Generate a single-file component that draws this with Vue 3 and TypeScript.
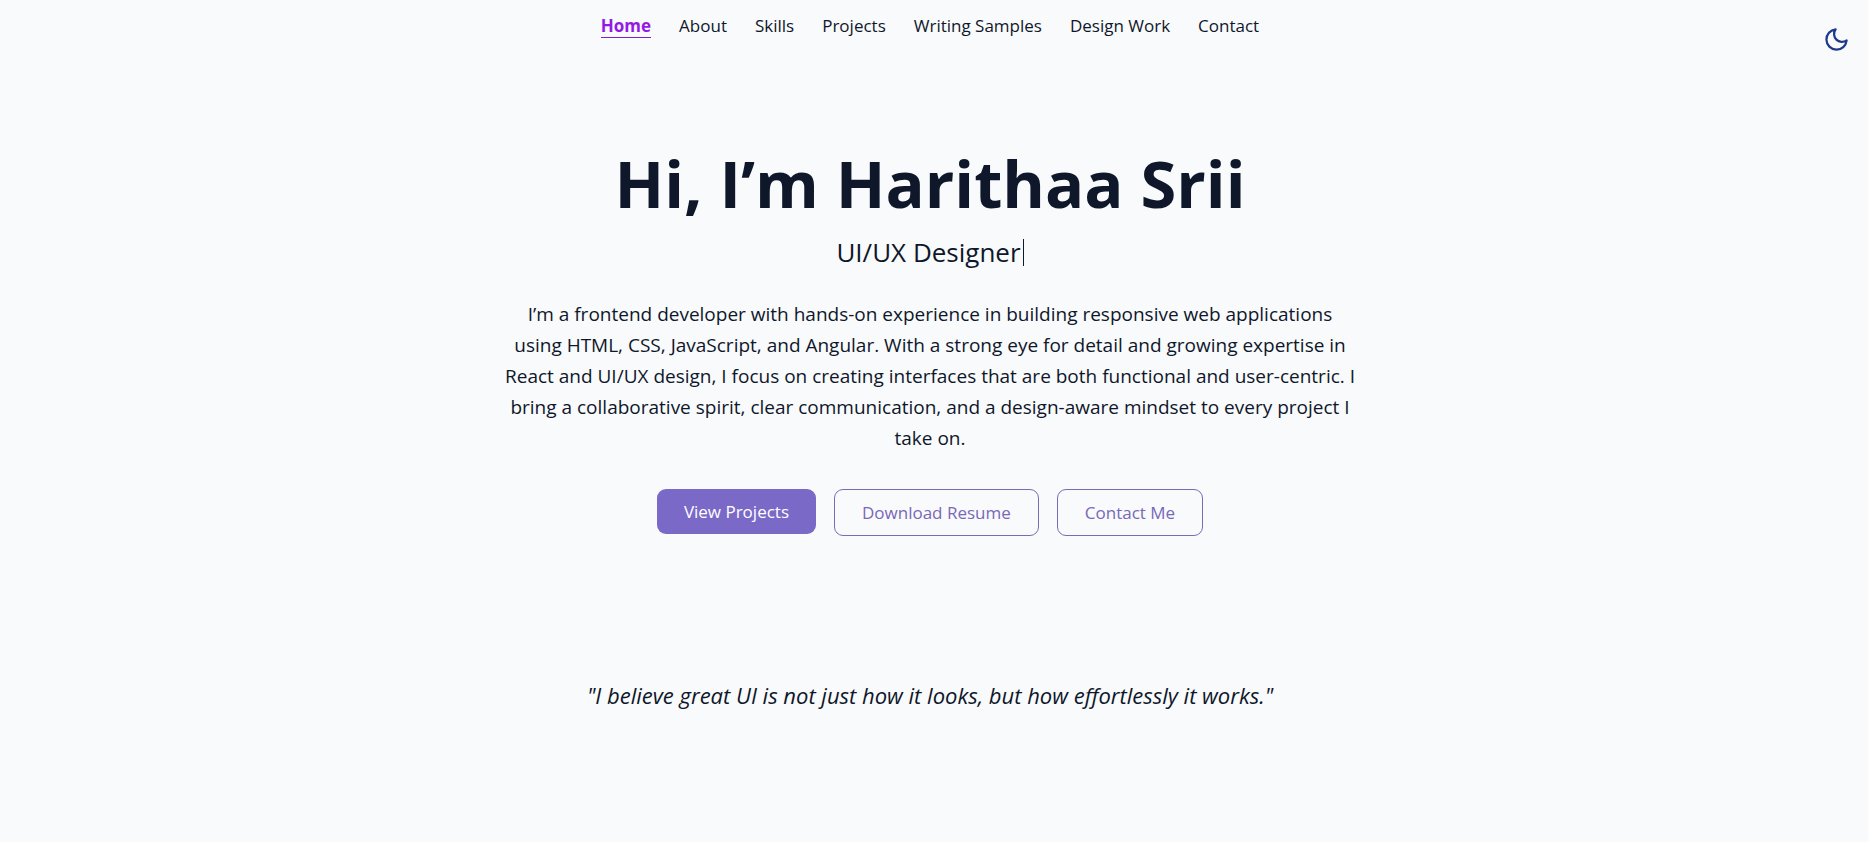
<script setup lang="ts">
import { ref } from 'vue'

interface NavLink {
  label: string
  target: string
}

const links: NavLink[] = [
  { label: 'Home', target: '#home' },
  { label: 'About', target: '#about' },
  { label: 'Skills', target: '#skills' },
  { label: 'Projects', target: '#projects' },
  { label: 'Writing Samples', target: '#writing' },
  { label: 'Design Work', target: '#design' },
  { label: 'Contact', target: '#contact' },
]

const active = ref('Home')
const dark = ref(false)
</script>

<template>
  <div class="page" :class="{ dark }">
    <header class="topbar">
      <nav class="nav" aria-label="Main">
        <a
          v-for="link in links"
          :key="link.label"
          :href="link.target"
          class="nav-link"
          :class="{ active: active === link.label }"
          @click="active = link.label"
        >{{ link.label }}</a>
      </nav>
      <button class="theme" type="button" aria-label="Toggle dark mode" @click="dark = !dark">
        <svg viewBox="0 0 24 24" width="27" height="27" fill="none" stroke="currentColor" stroke-width="2" stroke-linecap="round" stroke-linejoin="round" aria-hidden="true">
          <path d="M21 12.79A9 9 0 1 1 11.21 3 7 7 0 0 0 21 12.79z" />
        </svg>
      </button>
    </header>

    <main>
      <section id="home" class="hero">
        <h1>Hi, I’m Harithaa Srii</h1>
        <p class="role">UI/UX Designer<span class="caret"></span></p>
        <p class="intro">
          I’m a frontend developer with hands-on experience in building responsive web applications
          using HTML, CSS, JavaScript, and Angular. With a strong eye for detail and growing
          expertise in React and UI/UX design, I focus on creating interfaces that are both
          functional and user-centric. I bring a collaborative spirit, clear communication, and a
          design-aware mindset to every project I take on.
        </p>
        <div class="actions">
          <a class="button primary" href="#projects">View Projects</a>
          <a class="button" href="#resume">Download Resume</a>
          <a class="button" href="#contact">Contact Me</a>
        </div>
      </section>
      <section class="belief">
        <p>"I believe great UI is not just how it looks, but how effortlessly it works."</p>
      </section>
    </main>
  </div>
</template>

<style>
body {
  margin: 0;
  background: #f9fafc;
}
</style>

<style scoped>
.page {
  box-sizing: border-box;
  min-height: 100vh;
  padding-right: 8px;
  background: #f9fafc;
  color: #0f172a;
  font-family: "Segoe UI", "Open Sans", sans-serif;
}

.page.dark {
  background: #0f172a;
  color: #f9fafc;
}

.topbar {
  position: relative;
  padding-top: 15px;
}

.nav {
  display: flex;
  flex-wrap: wrap;
  justify-content: center;
  gap: 28px;
}

.nav-link {
  border-bottom: 1px solid transparent;
  color: inherit;
  font-size: 17px;
  line-height: 22px;
  text-decoration: none;
}

.nav-link.active {
  border-color: #7e22ce;
  color: #9419e6;
  font-weight: 700;
}

.theme {
  position: absolute;
  top: 26px;
  right: 10px;
  display: flex;
  padding: 0;
  border: 0;
  background: none;
  color: #1e3a8a;
  cursor: pointer;
}

.hero {
  display: flex;
  flex-direction: column;
  align-items: center;
  padding: 109px 24px 0;
  text-align: center;
}

h1 {
  margin: 0;
  font-size: 65px;
  font-weight: 700;
  line-height: 72px;
}

.role {
  display: flex;
  align-items: center;
  margin: 13px 0 0;
  font-size: 26px;
  line-height: 40px;
}

.caret {
  width: 1px;
  height: 27px;
  margin-left: 2px;
  background: currentColor;
}

.intro {
  max-width: 853px;
  margin: 27px 0 0;
  font-size: 19px;
  line-height: 31px;
}

.actions {
  display: flex;
  flex-wrap: wrap;
  align-items: flex-start;
  justify-content: center;
  gap: 18px;
  margin-top: 35px;
}

.button {
  padding: 9px 27px;
  border: 1px solid #7a6bb8;
  border-radius: 9px;
  color: #7868b8;
  font-size: 17px;
  line-height: 27px;
  text-decoration: none;
}

.button.primary {
  border: 0;
  background: #7a69c7;
  color: #ffffff;
}

.belief {
  padding: 141px 24px 0;
  font-size: 22px;
  font-style: italic;
  line-height: 36px;
  text-align: center;
}

.belief p {
  margin: 0;
}
</style>
